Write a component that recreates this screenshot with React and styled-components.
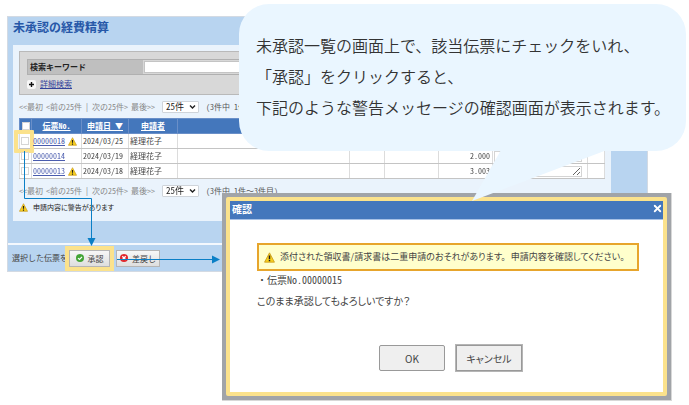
import styled, { createGlobalStyle, css } from 'styled-components';
import { FiX } from 'react-icons/fi';

const GlobalStyle = createGlobalStyle`
  * {
    box-sizing: border-box;
  }

  body {
    margin: 0;
    background: #fff;
    color: #444;
    font-family: "Noto Sans Mono CJK JP", "Noto Sans CJK JP", sans-serif;
    font-size: 8px;
    line-height: 12px;
  }

  button, input, select, textarea {
    margin: 0;
    font-family: inherit;
    color: inherit;
  }
`;

const Stage = styled.main`
  position: relative;
  padding: 16px 41px 133px 7px;
`;

const AppWindow = styled.section`
  border: 1px solid #d3dae3;
  background: #b8d4f0;
`;

const Title = styled.h1`
  margin: 0;
  padding: 4px 5px 12px;
  color: #2657a8;
  font-size: 12px;
  line-height: 12px;
  font-weight: 700;
`;

const Panel = styled.div`
  margin: 0 36px 0 5px;
  padding: 6px 6px 9px;
  background: #eaf3fc;
`;

const SearchBox = styled.form`
  height: 44px;
  padding: 7px;
  border: 1px solid #b9b9b9;
  background: #d8d8d8;
`;

const SearchRow = styled.div`
  display: flex;
  height: 16px;
  border: 1px solid #b0b0b0;
`;

const SearchLabel = styled.label`
  width: 115px;
  padding-left: 2px;
  background: #bfbfbf;
  color: #222;
  font-weight: 700;
  line-height: 13px;
`;

const SearchInput = styled.input`
  flex: 1;
  min-width: 0;
  height: 12px;
  margin: 1px;
  padding: 0 2px;
  border: 1px solid #c4c4c4;
  background: #fff;
  font-size: 8px;
`;

const DetailLink = styled.a`
  display: inline-flex;
  align-items: center;
  gap: 4px;
  margin-top: 3px;
  color: #33429a;
  text-decoration: none;

  span {
    text-decoration: underline;
  }
`;

const PagerRow = styled.nav`
  display: flex;
  align-items: center;
  height: 23px;
  color: #888;
  white-space: nowrap;
`;

const PagerSteps = styled.span`
  display: flex;
  gap: 3px;
`;

const SelectWrap = styled.label`
  position: relative;
  margin: 0 7px;

  svg {
    position: absolute;
    right: 3px;
    top: 3px;
    pointer-events: none;
  }
`;

const PageSelect = styled.select`
  display: block;
  width: 37px;
  height: 12px;
  padding: 0 3px;
  border: 1px solid #cfd4da;
  border-radius: 1px;
  background: #fff;
  color: #222;
  font-size: 9px;
  line-height: 10px;
  appearance: none;
`;

const Count = styled.span`
  color: #555;
`;

const Table = styled.table`
  width: 100%;
  table-layout: fixed;
  border-collapse: collapse;
  background: #fff;
`;

const Col = styled.col`
  width: ${({ $w }) => ($w ? `${$w}px` : 'auto')};
`;

const Th = styled.th`
  height: 15px;
  padding: 0;
  border: 1px solid #6a8fc8;
  background: #4477bc;
  color: #fff;
  line-height: 12px;
  text-decoration: underline;
`;

const Td = styled.td`
  position: relative;
  height: 15px;
  padding: 0 2px 0 1px;
  border: 1px solid #c4c4c4;
  border-left-color: #dcdcdc;
  border-right-color: #dcdcdc;
  line-height: 12px;
  text-align: ${({ $right }) => ($right ? 'right' : 'left')};
  white-space: nowrap;
`;

const Check = styled.input`
  display: block;
  width: 8px;
  height: 8px;
  margin: 0 auto;
  border: 1px solid #d5d5d5;
  background: #fff;
  appearance: none;
`;

const CheckFrame = styled.span`
  position: absolute;
  top: -4px;
  left: -6px;
  width: 20px;
  height: 23px;
  border: 4px solid #fbe28c;
  border-radius: 1px;
  pointer-events: none;
`;

const SlipCell = styled.span`
  display: flex;
  align-items: center;
  justify-content: space-between;
  padding-right: 2px;
`;

const SlipLink = styled.a`
  color: #4a5cae;
`;

const Memo = styled.textarea`
  display: block;
  width: 88px;
  height: 11px;
  padding: 0;
  border: 1px solid #d4d4d4;
  font-size: 8px;
  resize: both;
`;

const Note = styled.p`
  display: flex;
  align-items: center;
  gap: 5px;
  height: 10px;
  margin: 0;
  color: #222;
  font-family: "Noto Sans CJK JP", sans-serif;
  font-size: 7px;
  font-feature-settings: "palt";
`;

const Footer = styled.footer`
  display: flex;
  align-items: center;
  height: 28px;
  margin-top: 22px;
  padding-left: 4px;
  border-top: 2px solid #f4f8fd;
`;

const ActionButton = styled.button`
  display: flex;
  align-items: center;
  justify-content: center;
  gap: 4px;
  flex-shrink: 0;
  width: 44px;
  height: 17px;
  margin-left: 6px;
  padding: 0;
  border: 1px solid #b5b5b5;
  background: linear-gradient(#f7f7f7, #dedede);
  font-size: 8px;
  white-space: nowrap;

  svg {
    flex-shrink: 0;
  }

  ${({ $marked }) =>
    $marked &&
    css`
      width: 41px;
      margin-left: 1px;
      box-shadow: 0 0 0 4px #fbe28c;
    `}
`;

const Arrows = styled.svg`
  position: absolute;
  top: 0;
  left: 0;
  pointer-events: none;
`;

const Dialog = styled.div`
  position: absolute;
  top: 193px;
  left: 222px;
  right: 17px;
  padding: 4px;
  border: 1px solid #d8d8d8;
  border-width: 0 1px 1px 0;
  background: #a1a4a8;
`;

const DialogFrame = styled.div`
  border: 4px solid #fbe28c;
  border-radius: 2px;
  background: #fff;
`;

const DialogHead = styled.header`
  display: flex;
  align-items: center;
  justify-content: space-between;
  height: 19px;
  padding: 0 0 3px 2px;
  border-bottom: 1px solid #a9c2e6;
  background: #4477bc;
  color: #fff;

  h2 {
    margin: 0;
    font-size: 10px;
    line-height: 14px;
  }
`;

const CloseButton = styled.button`
  display: flex;
  padding: 0;
  border: 0;
  background: none;
  color: #fff;
`;

const DialogBody = styled.div`
  padding: 23px 24px 21px 27px;
  font-size: 10px;
  line-height: 14px;

  p {
    margin: 0;
  }
`;

const Warning = styled.div`
  display: flex;
  align-items: center;
  gap: 5px;
  height: 28px;
  padding: 0 5px;
  border: 2px solid #e7a52c;
  background: #ffffcc;
  font-family: "Noto Sans CJK JP", sans-serif;
  font-size: 9px;
  font-feature-settings: "palt";
  white-space: nowrap;
`;

const SlipNumber = styled.p`
  padding-top: 2px;
`;

const Question = styled.p`
  padding-top: 7px;
  font-family: "Noto Sans CJK JP", sans-serif;
  font-feature-settings: "palt";
`;

const DialogButtons = styled.div`
  display: flex;
  justify-content: center;
  gap: 11px;
  padding: 37px 0 0 5px;
`;

const DialogButton = styled.button`
  width: 66px;
  height: 26px;
  padding: 0;
  border: 1px solid #999;
  border-radius: 2px;
  background: #efefef;
  font-family: "Noto Sans CJK JP", sans-serif;
  font-size: 10px;
  font-feature-settings: "palt";

  ${({ $focused }) =>
    $focused &&
    css`
      border-radius: 0;
      box-shadow: 0 0 0 1px #b5b5b5;
    `}
`;

const Balloon = styled.aside`
  position: absolute;
  top: 4px;
  left: 239px;
  right: 3px;
  padding: 26px 0 28px 17px;
  border-radius: 30px;
  background: #eaf6ff;
  color: #333;
  font-family: "Noto Sans CJK JP", sans-serif;
  font-size: 16px;
  font-weight: 350;
  line-height: 31px;
  white-space: nowrap;

  p {
    margin: 0;
  }
`;

const Tail = styled.svg`
  position: absolute;
  top: 146px;
  left: 232px;
`;

const WarnIcon = ({ size = 9 }) => (
  <svg width={size} height={size} viewBox="0 0 20 20" aria-hidden="true">
    <path d="M10 1.5 19 18.5H1Z" fill="#f7cf1d" stroke="#c99a1c" strokeWidth="1.5" strokeLinejoin="round" />
    <path d="M10 6.5v6.5M10 14.5v2.5" stroke="#1d1d1d" strokeWidth="2.6" />
  </svg>
);

const PlusIcon = () => (
  <svg width="9" height="9" viewBox="0 0 9 9" aria-hidden="true">
    <rect width="9" height="9" rx="2" fill="#f7f7f7" />
    <path d="M4.5 2v5M2 4.5h5" stroke="#111" strokeWidth="1.4" />
  </svg>
);

const OkIcon = () => (
  <svg width="8" height="8" viewBox="0 0 8 8" aria-hidden="true">
    <circle cx="4" cy="4" r="4" fill="#43a535" />
    <path d="M2 4.1 3.5 5.5 6 2.8" fill="none" stroke="#fff" strokeWidth="1.2" />
  </svg>
);

const RejectIcon = () => (
  <svg width="8" height="8" viewBox="0 0 8 8" aria-hidden="true">
    <circle cx="4" cy="4" r="4" fill="#e0262b" />
    <path d="M2.3 2.3 5.7 5.7M5.7 2.3 2.3 5.7" stroke="#fff" strokeWidth="1.3" />
  </svg>
);

const columns = [
  { w: 12 },
  { w: 50, label: '伝票No.' },
  { w: 47, label: '申請日 ▼' },
  { w: 49, label: '申請者' },
  {},
  { w: 35 },
  { w: 54 },
  { w: 54 },
  { w: 95 },
  { w: 17 },
];

const slips = [
  { no: '00000018', date: '2024/03/25', name: '経理花子', amount: '1.000', warn: true, marked: true },
  { no: '00000014', date: '2024/03/19', name: '経理花子', amount: '2.000' },
  { no: '00000013', date: '2024/03/18', name: '経理花子', amount: '3.003', warn: true },
];

function Pager() {
  return (
    <PagerRow>
      <PagerSteps>
        <span>{'<<最初'}</span>
        <span>{'<前の25件'}</span>
        <span>|</span>
        <span>{'次の25件>'}</span>
        <span>{'最後>>'}</span>
      </PagerSteps>
      <SelectWrap>
        <PageSelect aria-label="表示件数" defaultValue="25">
          <option value="25">25件</option>
        </PageSelect>
        <svg width="7" height="6" viewBox="0 0 7 6" aria-hidden="true">
          <path d="M1 1.5 3.5 4 6 1.5" fill="none" stroke="#222" strokeWidth="1.4" />
        </svg>
      </SelectWrap>
      <Count>(3件中 1件～3件目)</Count>
    </PagerRow>
  );
}

function SlipTable() {
  return (
    <Table>
      <colgroup>
        {columns.map((col, i) => (
          <Col key={i} $w={col.w} />
        ))}
      </colgroup>
      <thead>
        <tr>
          {columns.map((col, i) => (
            <Th key={i}>{i === 0 ? <Check type="checkbox" aria-label="すべて選択" /> : col.label}</Th>
          ))}
        </tr>
      </thead>
      <tbody>
        {slips.map((slip) => (
          <tr key={slip.no}>
            <Td>
              <Check type="checkbox" aria-label={slip.no} />
              {slip.marked && <CheckFrame />}
            </Td>
            <Td>
              <SlipCell>
                <SlipLink href="#slip">{slip.no}</SlipLink>
                {slip.warn && <WarnIcon />}
              </SlipCell>
            </Td>
            <Td>{slip.date}</Td>
            <Td>{slip.name}</Td>
            <Td />
            <Td />
            <Td />
            <Td $right>{slip.amount}</Td>
            <Td>
              <Memo aria-label="コメント" />
            </Td>
            <Td />
          </tr>
        ))}
      </tbody>
    </Table>
  );
}

export default function App() {
  return (
    <Stage>
      <GlobalStyle />
      <AppWindow>
        <Title>未承認の経費精算</Title>
        <Panel>
          <SearchBox>
            <SearchRow>
              <SearchLabel htmlFor="keyword">検索キーワード</SearchLabel>
              <SearchInput id="keyword" type="text" />
            </SearchRow>
            <DetailLink href="#detail">
              <PlusIcon />
              <span>詳細検索</span>
            </DetailLink>
          </SearchBox>
          <Pager />
          <SlipTable />
          <Pager />
          <Note>
            <WarnIcon />
            申請内容に警告があります
          </Note>
        </Panel>
        <Footer>
          選択した伝票を
          <ActionButton type="button" $marked>
            <OkIcon />
            承認
          </ActionButton>
          <ActionButton type="button">
            <RejectIcon />
            差戻し
          </ActionButton>
        </Footer>
      </AppWindow>

      <Arrows width="222" height="272" viewBox="0 0 222 272" aria-hidden="true">
        <path d="M24.5 151V198.5H91.5V239M117 259.5H213" fill="none" stroke="#0a7fc6" />
        <path d="M87.5 238h8l-4 8zM212 255.5v8l8-4z" fill="#0a7fc6" />
      </Arrows>

      <Dialog role="dialog" aria-labelledby="dialog-title">
        <DialogFrame>
          <DialogHead>
            <h2 id="dialog-title">確認</h2>
            <CloseButton type="button" aria-label="閉じる">
              <FiX size={11} strokeWidth={4} />
            </CloseButton>
          </DialogHead>
          <DialogBody>
            <Warning>
              <WarnIcon size={11} />
              <span>添付された領収書/請求書は二重申請のおそれがあります。</span>
              <span>申請内容を確認してください。</span>
            </Warning>
            <SlipNumber>・伝票No.00000015</SlipNumber>
            <Question>このまま承認してもよろしいですか？</Question>
            <DialogButtons>
              <DialogButton type="button">OK</DialogButton>
              <DialogButton type="button" $focused>
                キャンセル
              </DialogButton>
            </DialogButtons>
          </DialogBody>
        </DialogFrame>
      </Dialog>

      <Balloon>
        <p>未承認一覧の画面上で、該当伝票にチェックをいれ、</p>
        <p>「承認」をクリックすると、</p>
        <p>下記のような警告メッセージの確認画面が表示されます。</p>
        <Tail width="136" height="52" viewBox="0 0 136 52" aria-hidden="true">
          <path d="M30 0H136L1 51Z" fill="#eaf6ff" />
        </Tail>
      </Balloon>
    </Stage>
  );
}
